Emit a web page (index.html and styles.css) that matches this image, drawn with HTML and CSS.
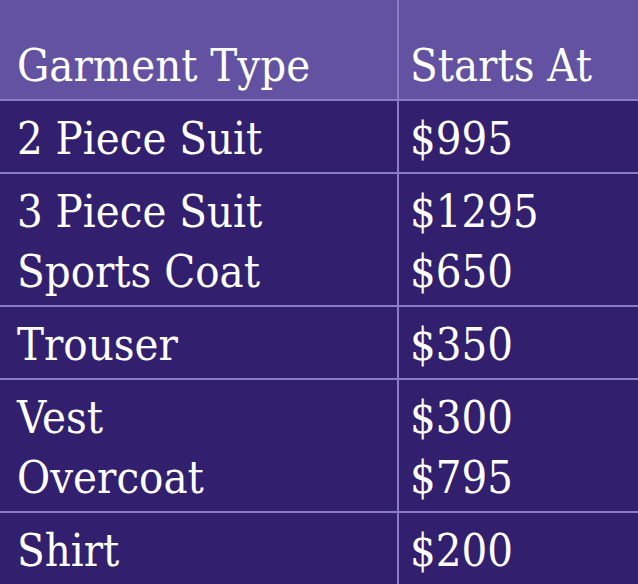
FILE: index.html
```html
<!DOCTYPE html>
<html lang="en">
<head>
<meta charset="utf-8">
<title>Garment Prices</title>
<link rel="stylesheet" href="styles.css">
</head>
<body>
<div class="price-table">
  <div class="cell head">Garment Type</div>
  <div class="cell head">Starts At</div>

  <div class="cell">2 Piece Suit</div>
  <div class="cell">$995</div>

  <div class="cell"><div>3 Piece Suit</div><div>Sports Coat</div></div>
  <div class="cell"><div>$1295</div><div>$650</div></div>

  <div class="cell">Trouser</div>
  <div class="cell">$350</div>

  <div class="cell"><div>Vest</div><div>Overcoat</div></div>
  <div class="cell"><div>$300</div><div>$795</div></div>

  <div class="cell">Shirt</div>
  <div class="cell">$200</div>
</div>
</body>
</html>
```
FILE: styles.css
```css
html, body {
  margin: 0;
  padding: 0;
  background: #321f6e;
}
.price-table {
  display: grid;
  grid-template-columns: 397px 1fr;
  gap: 2px;
  background: #8a7dc6;
  width: 638px;
  height: 584px;
  overflow: hidden;
  font-family: "DejaVu Serif Condensed", "DejaVu Serif", serif;
  font-stretch: condensed;
  font-size: 45px;
  line-height: 60px;
  color: #ffffff;
}
.cell {
  background: #321f6e;
  padding: 8px 0 3px 17px;
}
.cell:nth-child(even) {
  padding-left: 11px;
}
.head {
  background: #6352a1;
  height: 99px;
  box-sizing: border-box;
  padding-top: 36px;
}
```
